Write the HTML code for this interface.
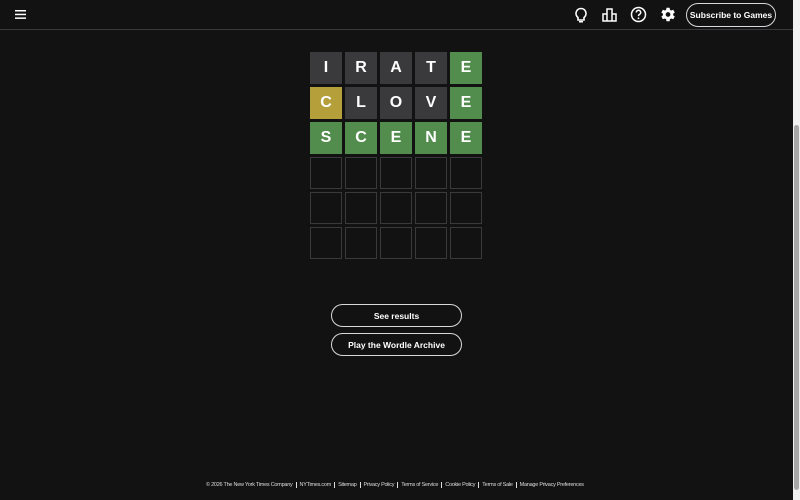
<!DOCTYPE html>
<html><head><style>
body{margin:0;width:800px;height:500px;background:#121213;font-family:"Liberation Sans",sans-serif;color:#fff;overflow:hidden;position:relative}
.hdr{position:absolute;left:0;top:0;width:793px;height:29px;border-bottom:1px solid #3a3a3c}
.sb{position:absolute;right:0;top:0;width:7px;height:500px;background:#f1f1f1}
.sb .th{position:absolute;left:1px;top:125px;width:5px;height:365px;background:#a8a8a8;border-radius:3px}
.t{position:absolute;width:32px;height:32px;display:flex;align-items:center;justify-content:center;font-weight:bold;font-size:16px;box-sizing:border-box}
.g{background:#538d4e}.y{background:#b59f3b}.x{background:#3a3a3c}.e{border:1px solid #3a3a3c}
.btn{position:absolute;left:331px;width:131px;height:23px;box-sizing:border-box;border:1px solid #d7dadc;border-radius:12px;font-size:8.5px;font-weight:bold;display:flex;align-items:center;justify-content:center}
.ft{position:absolute;top:482px;left:206px;font-size:5.5px;color:#ddd;white-space:nowrap;letter-spacing:-0.25px}
.ft span{border-left:1px solid #ddd;margin-left:3px;padding-left:3px}
</style></head><body>
<div class="hdr">
<svg style="position:absolute;left:15px;top:10px" width="11" height="9"><rect y="0" width="11" height="1.5" fill="#fff"/><rect y="3.7" width="11" height="1.5" fill="#fff"/><rect y="7.4" width="11" height="1.5" fill="#fff"/></svg>
<svg style="position:absolute;left:574px;top:7px" width="14" height="16" viewBox="0 0 14 16"><path d="M7 1.5a5 5 0 0 0-3 9v2.5h6v-2.5a5 5 0 0 0-3-9z" fill="none" stroke="#fff" stroke-width="1.6"/><rect x="5" y="14" width="4" height="1.5" fill="#fff"/></svg>
<svg style="position:absolute;left:602px;top:7px" width="16" height="15" viewBox="0 0 16 15"><path d="M1 14V7h4V2h5v5h4v7zM5 7v7M10 7v7" fill="none" stroke="#fff" stroke-width="1.5"/></svg>
<svg style="position:absolute;left:630px;top:6px" width="17" height="17" viewBox="0 0 17 17"><circle cx="8.5" cy="8.5" r="7" fill="none" stroke="#fff" stroke-width="1.5"/><path d="M6.3 6.5a2.2 2.2 0 1 1 3 2c-.7.4-.8.8-.8 1.6" fill="none" stroke="#fff" stroke-width="1.5"/><circle cx="8.5" cy="12.3" r=".9" fill="#fff"/></svg>
<svg style="position:absolute;left:658px;top:5px" width="19" height="19" viewBox="0 0 24 24"><path fill="#fff" d="M19.1 12.9a7 7 0 0 0 0-1.8l2.1-1.6-2-3.5-2.5 1a7 7 0 0 0-1.6-.9L14.7 3.5h-4l-.4 2.6a7 7 0 0 0-1.6.9l-2.5-1-2 3.5 2.1 1.6a7 7 0 0 0 0 1.8l-2.1 1.6 2 3.5 2.5-1a7 7 0 0 0 1.6.9l.4 2.6h4l.4-2.6a7 7 0 0 0 1.6-.9l2.5 1 2-3.5zM12.7 15a3 3 0 1 1 0-6 3 3 0 0 1 0 6z"/></svg>
<div style="position:absolute;left:686px;top:3px;width:90px;height:24px;box-sizing:border-box;border:1px solid #d7dadc;border-radius:12px;font-size:8.5px;font-weight:bold;display:flex;align-items:center;justify-content:center">Subscribe to Games</div>
</div>
<div class="sb"><div class="th"></div></div>
<div class="t x" style="left:310px;top:52px">I</div><div class="t x" style="left:345px;top:52px">R</div><div class="t x" style="left:380px;top:52px">A</div><div class="t x" style="left:415px;top:52px">T</div><div class="t g" style="left:450px;top:52px">E</div>
<div class="t y" style="left:310px;top:87px">C</div><div class="t x" style="left:345px;top:87px">L</div><div class="t x" style="left:380px;top:87px">O</div><div class="t x" style="left:415px;top:87px">V</div><div class="t g" style="left:450px;top:87px">E</div>
<div class="t g" style="left:310px;top:122px">S</div><div class="t g" style="left:345px;top:122px">C</div><div class="t g" style="left:380px;top:122px">E</div><div class="t g" style="left:415px;top:122px">N</div><div class="t g" style="left:450px;top:122px">E</div>
<div class="t e" style="left:310px;top:157px"></div><div class="t e" style="left:345px;top:157px"></div><div class="t e" style="left:380px;top:157px"></div><div class="t e" style="left:415px;top:157px"></div><div class="t e" style="left:450px;top:157px"></div>
<div class="t e" style="left:310px;top:192px"></div><div class="t e" style="left:345px;top:192px"></div><div class="t e" style="left:380px;top:192px"></div><div class="t e" style="left:415px;top:192px"></div><div class="t e" style="left:450px;top:192px"></div>
<div class="t e" style="left:310px;top:227px"></div><div class="t e" style="left:345px;top:227px"></div><div class="t e" style="left:380px;top:227px"></div><div class="t e" style="left:415px;top:227px"></div><div class="t e" style="left:450px;top:227px"></div>
<div class="btn" style="top:304px">See results</div>
<div class="btn" style="top:333px">Play the Wordle Archive</div>
<div class="ft">© 2026 The New York Times Company<span>NYTimes.com</span><span>Sitemap</span><span>Privacy Policy</span><span>Terms of Service</span><span>Cookie Policy</span><span>Terms of Sale</span><span>Manage Privacy Preferences</span></div>
</body></html>
